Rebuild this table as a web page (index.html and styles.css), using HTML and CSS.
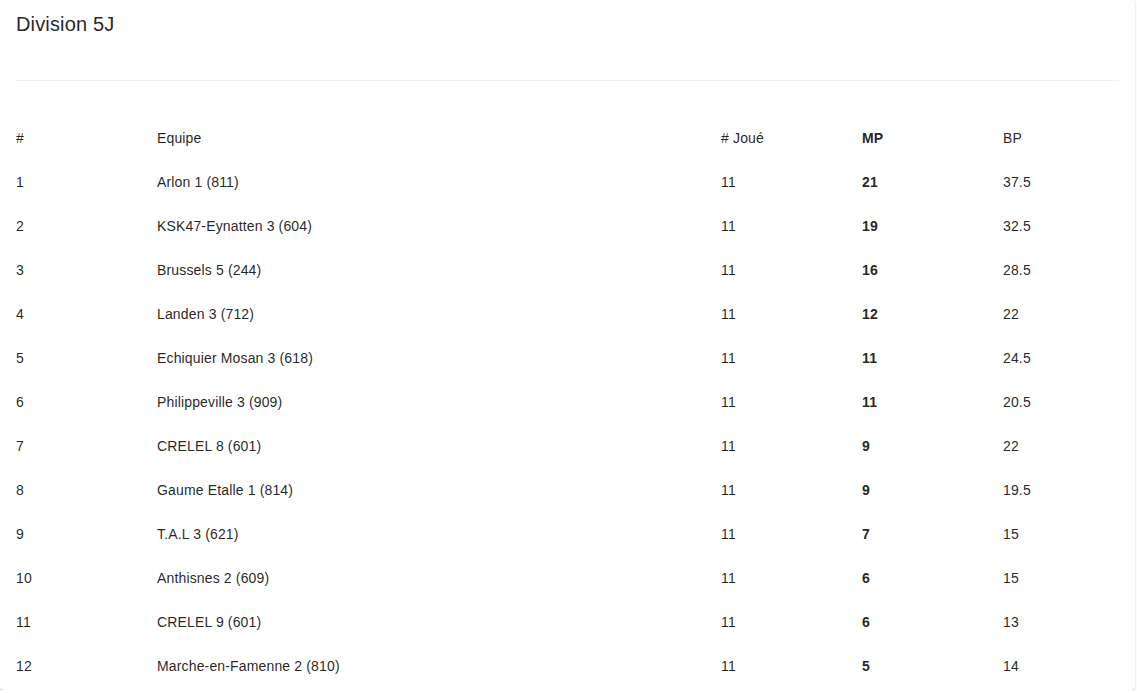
FILE: index.html
```html
<!DOCTYPE html>
<html lang="fr">
<head>
<meta charset="utf-8">
<title>Division 5J</title>
<link rel="stylesheet" href="styles.css">
</head>
<body>
<div class="card">
  <h2 class="title">Division 5J</h2>
  <hr class="divider">
  <div class="table">
    <div class="row head"><span>#</span><span>Equipe</span><span># Joué</span><span class="b">MP</span><span>BP</span></div>
    <div class="row"><span>1</span><span>Arlon 1 (811)</span><span>11</span><span class="b">21</span><span>37.5</span></div>
    <div class="row"><span>2</span><span>KSK47-Eynatten 3 (604)</span><span>11</span><span class="b">19</span><span>32.5</span></div>
    <div class="row"><span>3</span><span>Brussels 5 (244)</span><span>11</span><span class="b">16</span><span>28.5</span></div>
    <div class="row"><span>4</span><span>Landen 3 (712)</span><span>11</span><span class="b">12</span><span>22</span></div>
    <div class="row"><span>5</span><span>Echiquier Mosan 3 (618)</span><span>11</span><span class="b">11</span><span>24.5</span></div>
    <div class="row"><span>6</span><span>Philippeville 3 (909)</span><span>11</span><span class="b">11</span><span>20.5</span></div>
    <div class="row"><span>7</span><span>CRELEL 8 (601)</span><span>11</span><span class="b">9</span><span>22</span></div>
    <div class="row"><span>8</span><span>Gaume Etalle 1 (814)</span><span>11</span><span class="b">9</span><span>19.5</span></div>
    <div class="row"><span>9</span><span>T.A.L 3 (621)</span><span>11</span><span class="b">7</span><span>15</span></div>
    <div class="row"><span>10</span><span>Anthisnes 2 (609)</span><span>11</span><span class="b">6</span><span>15</span></div>
    <div class="row"><span>11</span><span>CRELEL 9 (601)</span><span>11</span><span class="b">6</span><span>13</span></div>
    <div class="row"><span>12</span><span>Marche-en-Famenne 2 (810)</span><span>11</span><span class="b">5</span><span>14</span></div>
  </div>
</div>
</body>
</html>
```

FILE: styles.css
```css
html, body {
  margin: 0;
  padding: 0;
  background: #ffffff;
}
body {
  font-family: "Liberation Sans", Arial, sans-serif;
  color: rgba(0, 0, 0, 0.87);
}
.card {
  width: 1135px;
  height: 690px;
  box-sizing: border-box;
  background: #ffffff;
  border-radius: 4px;
  box-shadow: 0 2px 1px -1px rgba(0,0,0,0.2), 0 1px 1px 0 rgba(0,0,0,0.14), 0 1px 3px 0 rgba(0,0,0,0.12);
  overflow: hidden;
}
.title {
  margin: 0;
  padding: 12px 16px 0;
  font-size: 20px;
  font-weight: 400;
  line-height: 24px;
  letter-spacing: 0.0075em;
  height: 80px;
  box-sizing: border-box;
}
.divider {
  margin: 0 16px;
  border: 0;
  height: 1px;
  background: #f1f1f1;
}
.table {
  margin-top: 35px;
}
.row {
  display: grid;
  grid-template-columns: 141px 564px 141px 141px 1fr;
  padding-left: 16px;
  height: 44px;
  line-height: 44px;
  font-size: 14px;
  letter-spacing: 0.01071em;
}
.b {
  font-weight: 700;
}
```
